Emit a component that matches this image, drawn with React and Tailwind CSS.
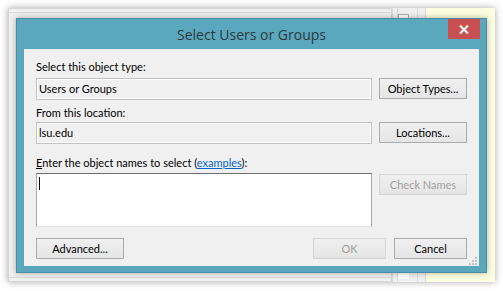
import React from 'react';

// Plain Win8-style push button
function Button({ children, disabled, className = '' }) {
    return (
        <div
            className={
                'flex h-[21px] items-center justify-center border bg-gradient-to-b from-[#f0f0f0] to-[#e5e5e5] text-[11px] ' +
                (disabled ? 'border-[#d5d5d5] text-[#a0a0a0] ' : 'border-[#acacac] text-black ') +
                className
            }
        >
            {children}
        </div>
    );
}

function ReadOnlyBox({ value }) {
    return (
        <div className="flex h-[22px] flex-1 items-center border border-[#c2c2c2] bg-[#f0f0f0] pl-[2px] text-[11px] text-black shadow-[inset_1px_1px_0_#ffffff,inset_-1px_-1px_0_#ffffff]">
            {value}
        </div>
    );
}

export default function App() {
    return (
        <div className="relative h-[291px] w-[503px] overflow-hidden bg-white font-['Lato',sans-serif]">
            {/* Window behind the dialog */}
            <div className="absolute left-[8px] top-[8px] flex h-[274px] w-[487px] shadow-[0_0_7px_rgba(0,0,0,0.35)]">
                <div className="flex flex-1 flex-col border border-[#d6d6d6] bg-[#f0f0f0]">
                    <div className="h-[4px] border-b border-[#dadada]"></div>
                    <div className="flex-1"></div>
                    <div className="h-[4px] border-t border-[#dadada]"></div>
                </div>
                <div className="flex w-[34px] bg-[#f0f0f0]">
                    <div className="w-[6px] border-x border-[#dadada]"></div>
                    <div className="flex w-[11px] flex-col">
                        <div className="mt-[6px] h-[8px] border border-[#b0b0b0] bg-white"></div>
                        <div className="flex-1"></div>
                        <div className="mb-[3px] h-[8px] bg-white"></div>
                    </div>
                    <div className="w-[9px] border-r border-[#dadada]"></div>
                    <div className="flex-1 border-r border-[#dadada]"></div>
                </div>
                <div className="w-[69px] bg-[#fdfde1]"></div>
            </div>

            {/* Dialog */}
            <div className="absolute left-[16px] top-[18px] flex h-[255px] w-[471px] flex-col border border-[#4b8ea3] bg-[#5ba7bd] px-[7px] pb-[6px] shadow-[0_0_6px_rgba(0,0,0,0.3)]">
                {/* Title bar */}
                <div className="relative flex h-[30px] items-center justify-center">
                    <span className="font-['Open_Sans',sans-serif] text-[14px] text-[#2b3a40]">Select Users or Groups</span>
                    <div className="absolute right-[-1px] top-0 flex h-[20px] w-[32px] items-center justify-center bg-[#c75050]">
                        <svg width="10" height="9" viewBox="0 0 10 9">
                            <path d="M1 0.5 L9 8.5 M9 0.5 L1 8.5" stroke="white" strokeWidth="2" />
                        </svg>
                    </div>
                </div>

                {/* Content */}
                <div className="relative flex flex-1 flex-col bg-[#f0f0f0] px-[12px] pt-[10px] text-[11px] leading-[16px] text-black">
                    <div>Select this object type:</div>
                    <div className="mt-[3px] flex gap-[7px]">
                        <ReadOnlyBox value="Users or Groups" />
                        <Button className="w-[88px]">Object Types...</Button>
                    </div>

                    <div className="mt-[5px]">From this location:</div>
                    <div className="mt-[1px] flex gap-[7px]">
                        <ReadOnlyBox value="lsu.edu" />
                        <Button className="w-[88px]">Locations...</Button>
                    </div>

                    <div className="mt-[11px]">
                        <span className="underline">E</span>nter the object names to select (
                        <span className="text-[#0066cc] underline">examples</span>):
                    </div>
                    <div className="mt-[2px] flex items-start gap-[7px]">
                        <div className="h-[54px] flex-1 border border-[#a9a9a9] border-b-[#e2e2e2] border-t-[#6e6e6e] bg-white pl-[2px] pt-[3px]">
                            <div className="h-[13px] w-[1px] bg-black"></div>
                        </div>
                        <Button disabled className="mt-[1px] w-[88px]">
                            Check Names
                        </Button>
                    </div>

                    <div className="mt-[11px] flex">
                        <Button className="w-[88px]">Advanced...</Button>
                        <div className="flex-1"></div>
                        <Button disabled className="w-[73px]">
                            OK
                        </Button>
                        <Button className="ml-[8px] w-[73px]">Cancel</Button>
                    </div>

                    {/* Resize grip */}
                    <svg className="absolute bottom-[1px] right-[2px]" width="8" height="8" viewBox="0 0 8 8">
                        <rect x="6" y="0" width="2" height="2" fill="#c4c4c4" />
                        <rect x="3" y="3" width="2" height="2" fill="#c4c4c4" />
                        <rect x="6" y="3" width="2" height="2" fill="#c4c4c4" />
                        <rect x="0" y="6" width="2" height="2" fill="#c4c4c4" />
                        <rect x="3" y="6" width="2" height="2" fill="#c4c4c4" />
                        <rect x="6" y="6" width="2" height="2" fill="#c4c4c4" />
                    </svg>
                </div>
            </div>
        </div>
    );
}
